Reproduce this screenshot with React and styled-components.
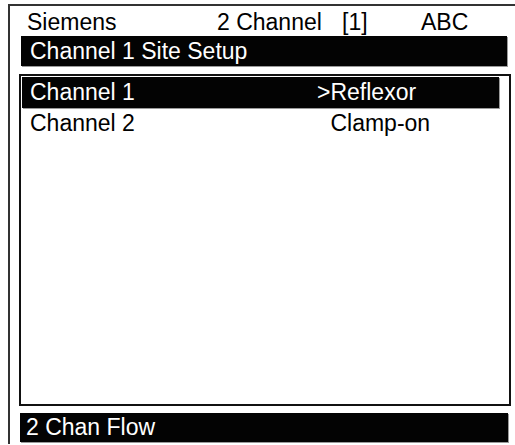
import React from 'react'
import styled, { createGlobalStyle } from 'styled-components'

const GlobalStyle = createGlobalStyle`
  html, body {
    margin: 0;
    padding: 0;
    background: #ffffff;
  }
  body {
    font-family: "Liberation Sans", Arial, sans-serif;
    color: #000;
  }
`

// outer display frame, only top + left edges are visible in the shot
const Screen = styled.div`
  box-sizing: border-box;
  margin: 4px 0 0 8px;
  height: 440px;
  border-top: 2px solid #333;
  border-left: 2px solid #333;
  padding: 0 4px 0 9px;
  display: flex;
  flex-direction: column;
  font-size: 23px;
`

const StatusRow = styled.div`
  display: grid;
  grid-template-columns: 190px 125px 79px auto;
  height: 30px;
  line-height: 30px;
  padding: 1px 0 0 8px;
  box-sizing: border-box;
  white-space: pre;
`

const Bar = styled.div`
  background: #030303;
  color: #fff;
  height: ${p => p.$h}px;
  line-height: ${p => p.$h}px;
  padding-left: ${p => p.$pad}px;
  margin: ${p => p.$margin};
  box-shadow: 1px 1px 0 #9a9a9a;
  white-space: pre;
`

const ListBox = styled.div`
  box-sizing: border-box;
  height: 332px;
  border: 2px solid #111;
  padding: 1px 10px 0 1px;
  margin-top: 8px;
  display: flex;
  flex-direction: column;
`

const Row = styled.div`
  display: grid;
  grid-template-columns: 287px 1fr;
  height: 31px;
  line-height: 31px;
  padding-left: 8px;
  background: ${p => (p.$selected ? '#030303' : 'transparent')};
  color: ${p => (p.$selected ? '#fff' : '#000')};
  box-shadow: ${p => (p.$selected ? '1px 1px 0 #9a9a9a' : 'none')};
`

const Cursor = styled.span`
  visibility: ${p => (p.$on ? 'visible' : 'hidden')};
`

const rows = [
  { label: 'Channel 1', value: 'Reflexor', selected: true },
  { label: 'Channel 2', value: 'Clamp-on', selected: false },
]

export default function App() {
  return (
    <>
      <GlobalStyle />
      <Screen>
        <StatusRow>
          <span>Siemens</span>
          <span>2 Channel</span>
          <span>[1]</span>
          <span>ABC</span>
        </StatusRow>
        <Bar $h={30} $pad={9} $margin="0 4px 0 2px">Channel 1 Site Setup</Bar>
        <ListBox>
          {rows.map(r => (
            <Row key={r.label} $selected={r.selected}>
              <span>{r.label}</span>
              <span>
                <Cursor $on={r.selected}>&gt;</Cursor>
                {r.value}
              </span>
            </Row>
          ))}
        </ListBox>
        <Bar $h={29} $pad={6} $margin="7px 3px 0 1px">2 Chan Flow</Bar>
      </Screen>
    </>
  )
}
